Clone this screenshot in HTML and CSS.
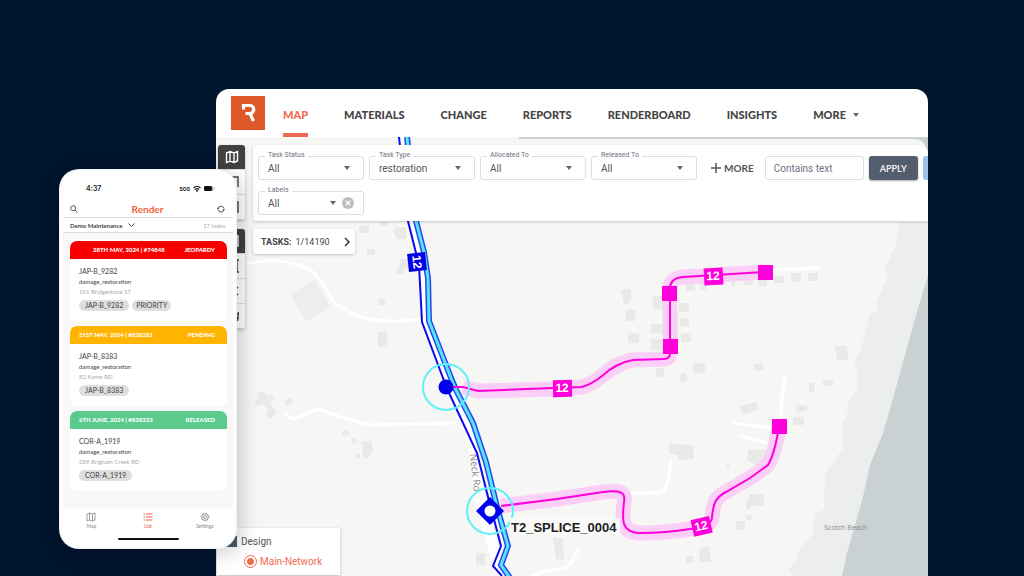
FILE: index.html
```html
<!DOCTYPE html>
<html lang="en">
<head>
<meta charset="utf-8">
<meta name="viewport" content="width=device-width, initial-scale=1">
<title>Render</title>
<link rel="stylesheet" href="styles.css">
</head>
<body>
<main class="window">
  <header class="topbar">
    <a class="logo" href="#" aria-label="Render home">
      <svg viewBox="0 0 34 34"><path d="M12.500 13.500V9.500H18.500a4 4 0 0 1 .5 8L22.500 25M19.500 17.500H14.500" fill="none" stroke="#fff" stroke-width="3.200"/></svg>
    </a>
    <nav class="nav">
      <a class="nav-link nav-link-active" href="#">MAP</a>
      <a class="nav-link" href="#">MATERIALS</a>
      <a class="nav-link" href="#">CHANGE</a>
      <a class="nav-link" href="#">REPORTS</a>
      <a class="nav-link" href="#">RENDERBOARD</a>
      <a class="nav-link" href="#">INSIGHTS</a>
      <a class="nav-link" href="#">MORE <span class="caret"></span></a>
    </nav>
  </header>

  <section class="stage">
    <svg class="map" viewBox="216 137 712 439" preserveAspectRatio="xMinYMin slice" role="img" aria-label="Network map">
      <rect x="216" y="137" width="712" height="439" fill="#f6f6f4"/>
      <path fill="#eceeed" d="M899 222 897 242 885 270 888 277 876 302 877 312 870 314 861 350 854 362 858 372 857 390 847 403 848 412 843 423 843 448 825 475 824 510 815 513 813 533 798 553 797 560 788 570 793 576H928V222Z"/>
      <path fill="#c9d1d3" d="M928 275 917 312 903 362 894 395 883 433 870 465 863 497 847 553 842 576H928ZM519 137H928V150H926Q925 139 914 139H519Z"/>
      <g fill="#e9e9e7">
        <path d="M359 226h10v7h-10zM381 222h7v4h-7zM395 227h11v12h-9l-4-8zM367 249h8v6h-8zM400 259h8v9h-4v6h-7v-7h3zM379 299h6v6h-6zM378 332h9v15h-9zM258 394l5-3 5 5 4-2 2 5-4 3 6 10-5 7-6-4 3-5-6-6-6 2-1-5 5-2zM284 402l6-5 4 5-7 4zM342 431l7-1v5l-7 1zM351 439l4-1 2 5-4 1zM362 442l9-1 2 11-3 1-1 5h-6zM355 454h5v4h-5zM257 393l4-2 2 4z"/>
        <path fill="#eceeed" d="M290 294 315 280 330 307 306 322Z"/>
        <path d="M621 290l10-1v9l-3 6h-4zM626 310h9v11h-9zM628 333h11v10h-11zM653 296h10v13h-10zM651 324h12v9h-12zM651 339h12v11h-12zM679 303h10v9h-10zM680 318h9v8h-9zM681 333h10v9h-10zM655 368h10l-2 9h-6zM679 374l7-2 2 9-7 2zM693 364l12-1v9l-11 2zM686 284h9v7h-9zM700 282h6v8h-5zM730 280h6l-3 8zM744 277h9v8h-9zM758 280h9v6h-9zM774 276h10v7h-10zM791 273h10v9h-10zM808 273h10v8h-10zM835 346h12l1 14h-11zM754 364h9v6h-9zM823 379l10 2v5l-10-1zM809 383h5v8h-5zM740 406l17-4 2 8-17 5zM796 405h11v6l-10 1zM793 417h11v8h-11zM669 444l24 1 1 14-15 1-1-5-9-2zM748 450l17-1v12l-8 5-10-6zM726 465h4v3h-4zM749 494h15v12h-13v3h-5v-9h3zM746 515h6v5h-6zM736 521h9v9h-10zM700 547h9l2 15h-12zM686 556h7v7h-7zM553 538h10v12l1 9h-8zM476 553h9v12h-9zM809 390h6v2h-6z"/>
      </g>
      <g class="road">
        <path d="M246 264C270 258 295 260 313 272C327 284 327 300 341 307C360 320 380 324 424 319"/>
        <path d="M285 415 294 419 318 409 343 418 370 425 455 423"/>
        <path d="M772 270 818 268M786 376Q781 390 781 426M733 423 778 429M739 436 772 444M671 460Q669 482 663 492L625 494M532 576 545 571 565 568Q573 564 577 550"/>
        <path class="road-wide" d="M403 137 412 221 422 268 425 321 446 378 464 415 474 455 481 495 490 535 505 576"/>
        <path class="road-wide" d="M475 455 476 487 486 528 500 576"/>
      </g>
      <text class="road-name" transform="translate(470 454) rotate(84)">Neck Rd</text>
      <text class="place-name" x="824" y="530">Scotch Beach</text>

      <g class="fibre-halo">
        <path d="M463 387 478 391 553 389 582 387Q592 384 602 376Q616 363 633 360L664 359Q670 359 670 353V293Q668 278 683 277L765 272"/>
        <path d="M501 506 557 499 603 492C620 490 626 492 624 502C622 520 621 532 639 533Q666 533 690 529Q711 527 712 518C713 503 716 497 726 492L750 478 768 465Q775 453 779 426"/>
      </g>
      <path class="cable" d="M399 137 408 221 419 265 422 322 443 378 450 395 477 453 487 493 501 546 493 566 502 576"/>
      <path class="cable-wide" d="M407 137 416 221 424 252 428 278 429 321 451 378 456 390 473 423 486 462 497 507 508 546 501 565 510 578"/>
      <path class="cable-core" d="M407 137 416 221 424 252 428 278 429 321 451 378 456 390 473 423 486 462 497 507 508 546 501 565 510 578"/>
      <g class="fibre">
        <path d="M446 387H463L478 391 553 388 582 387Q592 384 602 376Q616 363 633 360L664 359Q670 359 670 353V293Q668 278 683 277L765 272"/>
        <path d="M501 506 557 499 603 492C620 490 626 492 624 502C622 520 621 532 639 533Q666 533 690 529Q711 527 712 518C713 503 716 497 726 492L750 478 768 465Q775 453 779 426"/>
      </g>
      <g class="ring"><circle cx="446" cy="387" r="23"/><circle cx="490" cy="511" r="23"/></g>
      <circle cx="446" cy="387" r="7.500" fill="#0000f0"/>
      <path d="M490 497 504 511 490 525 476 511Z" fill="#0000f0"/>
      <circle cx="490" cy="511" r="5.500" fill="#fff"/>
      <path fill="#ff00dc" d="M662 286h15v15h-15zM663 339h15v15h-15zM758 265h15v15h-15zM772 419h15v15h-15z"/>
      <g class="count" transform="translate(417 262) rotate(84)"><rect x="-9" y="-9" width="18" height="18" fill="#0000e6"/><text y="4">12</text></g>
      <g class="count" transform="translate(562 388) rotate(-1)"><rect x="-9" y="-8" width="19" height="17"/><text y="4">12</text></g>
      <g class="count" transform="translate(713 276) rotate(-3)"><rect x="-9" y="-8" width="19" height="17"/><text y="4">12</text></g>
      <g class="count" transform="translate(701 526) rotate(-13)"><rect x="-9" y="-8" width="19" height="17"/><text y="4">12</text></g>
      <rect x="510" y="518" width="110" height="17" fill="#f9f9f8"/>
      <text class="splice" x="511" y="532">T2_SPLICE_0004</text>
    </svg>

    <div class="overlay">
      <div class="tools">
        <div class="tool-group">
          <button class="tool tool-on" aria-label="Map"><svg viewBox="0 0 14 14"><path d="M1.500 3 5 1.500 9 3 12.500 1.500V11L9 12.500 5 11 1.500 12.500ZM5 1.500V11M9 3V12.500"/></svg></button>
          <button class="tool" aria-label="Select area"><svg viewBox="0 0 14 14"><path d="M2 2H13V12M2 2V12"/></svg></button>
          <button class="tool" aria-label="Table"><svg viewBox="0 0 14 14"><path d="M2 2H13V12H2Z"/></svg></button>
        </div>
        <div class="tool-group">
          <button class="tool tool-on" aria-label="Layers"><svg viewBox="0 0 14 14"><path d="M2 2H13V12H2Z"/></svg></button>
          <button class="tool" aria-label="Measure"><svg viewBox="0 0 14 14"><path d="M14 1H10M12 1V13M14 13H10M3 1V13"/></svg></button>
          <button class="tool" aria-label="Route"><svg viewBox="0 0 14 14"><path d="M13 3 11 5V6M13 11 11 9"/></svg></button>
          <button class="tool" aria-label="Tags"><svg viewBox="0 0 14 14"><path d="M9 5H14M8 9H14M11 3 10 12M13.500 3 12.500 12"/></svg></button>
        </div>
      </div>
      <div class="panels">
        <form class="filters">
          <div class="filter-row">
            <div class="field"><label for="status">Task Status</label><select id="status"><option>All</option></select><span class="caret"></span></div>
            <div class="field"><label for="type">Task Type</label><select id="type"><option>restoration</option></select><span class="caret"></span></div>
            <div class="field"><label for="alloc">Allocated To</label><select id="alloc"><option>All</option></select><span class="caret"></span></div>
            <div class="field"><label for="rel">Released To</label><select id="rel"><option>All</option></select><span class="caret"></span></div>
            <button class="more" type="button"><svg viewBox="0 0 10 10"><path d="M5 0V10M0 5H10"/></svg>MORE</button>
            <input class="search" type="text" placeholder="Contains text" aria-label="Contains text">
            <button class="apply" type="button">APPLY</button>
            <button class="reset" type="button" aria-label="Reset"></button>
          </div>
          <div class="filter-row">
            <div class="field field-clear"><label for="labels">Labels</label><select id="labels"><option>All</option></select><span class="caret"></span>
              <button class="clear" type="button" aria-label="Clear"><svg viewBox="0 0 12 12"><circle cx="6" cy="6" r="6" fill="#bdbdbd"/><path d="M3.700 3.700 8.300 8.300M8.300 3.700 3.700 8.300" stroke="#fff" stroke-width="1.400"/></svg></button></div>
          </div>
        </form>
        <button class="tasks"><b>TASKS:</b><span>1/14190</span><svg viewBox="0 0 6 10"><path d="M1 1 5 5 1 9"/></svg></button>
      </div>
    </div>
    <div class="legend">
      <label class="legend-row"><input class="check" type="checkbox" checked>Design</label>
      <label class="legend-row legend-sub"><input class="radio" type="radio" name="network" checked>Main-Network</label>
    </div>
  </section>
</main>

<aside class="phone">
  <div class="status">
    <span class="time">4:37</span>
    <span class="sos">SOS</span>
    <svg class="wifi" viewBox="0 0 8 6"><path d="M.5 2Q4-1 7.500 2M1.800 3.500Q4 1.700 6.200 3.500" fill="none" stroke="#222" stroke-width="1.200"/><circle cx="4" cy="4.800" r="1" fill="#222"/></svg>
    <svg class="battery" viewBox="0 0 11 5"><rect width="9.500" height="5" rx="1.500" fill="#bbb"/><rect width="8" height="5" rx="1.500" fill="#111"/><rect x="10" y="1.500" width="1" height="2" fill="#bbb"/></svg>
  </div>
  <div class="appbar">
    <button class="icon" aria-label="Search"><svg viewBox="0 0 8 8"><circle cx="3.200" cy="3.200" r="2.500"/><path d="M5 5 7.500 7.500"/></svg></button>
    <span class="brand">Render</span>
    <button class="icon" aria-label="Refresh"><svg viewBox="0 0 8 8"><path d="M1 3.500A3.100 3.100 0 0 1 7 3.500M7 4.700A3.100 3.100 0 0 1 1 4.700M0 2.600 1 4 2.300 3M8 5.400 7 4.200 5.700 5.200"/></svg></button>
  </div>
  <div class="project"><button class="project-name">Demo Maintenance <svg viewBox="0 0 7 4"><path d="M.5.5 3.500 3.500 6.500.5"/></svg></button><span class="total">17 tasks</span></div>
  <div class="list">
    <article class="card">
      <header class="card-head jeopardy"><span>28TH MAY, 2024 | #74848</span><span>JEOPARDY</span></header>
      <div class="card-body"><h2>JAP-B_9282</h2><p>damage_restoration</p><p class="address">191 Bridgestone ST</p><div class="chips"><span class="chip">JAP-B_9282</span><span class="chip chip-tight">PRIORITY</span></div></div>
    </article>
    <article class="card">
      <header class="card-head pending"><span>31ST MAY, 2024 | #828282</span><span>PENDING</span></header>
      <div class="card-body"><h2>JAP-B_8383</h2><p>damage_restoration</p><p class="address">82 Kamo RD</p><div class="chips"><span class="chip">JAP-B_8383</span></div></div>
    </article>
    <article class="card">
      <header class="card-head released"><span>6TH JUNE, 2024 | #828333</span><span>RELEASED</span></header>
      <div class="card-body"><h2>COR-A_1919</h2><p>damage_restoration</p><p class="address">289 Brigham Creek RD</p><div class="chips"><span class="chip">COR-A_1919</span></div></div>
    </article>
  </div>
  <nav class="tabs">
    <a class="tab" href="#"><svg viewBox="0 0 10 10"><path d="M1 2 3.500 1 6.500 2 9 1V8L6.500 9 3.500 8 1 9ZM3.500 1V8M6.500 2V9"/></svg>Map</a>
    <a class="tab tab-active" href="#"><svg viewBox="0 0 10 10"><path d="M3 2H9.500M3 5H9.500M3 8H9.500M.5 2H2M.5 5H2M.5 8H2"/></svg>List</a>
    <a class="tab" href="#"><svg viewBox="0 0 10 10"><circle cx="5" cy="5" r="3.300"/><circle cx="5" cy="5" r="1.500"/><circle cx="5" cy="5" r="3.900" stroke-dasharray="1.500 1.560"/></svg>Settings</a>
  </nav>
  <div class="home"></div>
</aside>
</body>
</html>
```
FILE: styles.css
```css
* { box-sizing: border-box; }
body { margin: 0; height: 100vh; overflow: hidden; background: #00142e; font-family: Roboto, "Liberation Sans", sans-serif; color: #444; }
a { color: inherit; text-decoration: none; }
button { border: 0; padding: 0; background: none; font: inherit; color: inherit; }
svg { display: block; }
h2, p { margin: 0; font-weight: 400; }

.window { display: flex; flex-direction: column; height: 100vh; padding: 89px 96px 0 216px; }
.topbar { display: flex; align-items: stretch; flex: none; height: 48px; padding: 0 15px; background: #fff; border-radius: 13px 13px 0 0; }
.logo { width: 34px; height: 34px; margin-top: 7px; background: #dc5829; }
.nav { display: flex; gap: 36px; margin-left: 18px; font: 900 11px/16px Lato, sans-serif; }
.nav-link { display: flex; align-items: center; gap: 7px; padding-top: 8px; border-bottom: 4px solid transparent; white-space: nowrap; }
.nav-link-active { color: #f26a50; border-color: #ee6a55; }
.caret { width: 0; height: 0; border: 3px solid transparent; border-top: 4px solid #666; border-bottom: 0; pointer-events: none; }

.stage { position: relative; display: flex; flex-direction: column; flex: 1; min-height: 0; overflow: hidden; }
.map { position: absolute; inset: 0; width: 100%; height: 100%; }
.road { fill: none; stroke: #fff; stroke-width: 3; stroke-linecap: round; stroke-linejoin: round; }
.road-wide { stroke-width: 8; }
.road-name { font: 10px "Open Sans", sans-serif; fill: #888; }
.place-name { font: 7px "Open Sans", sans-serif; fill: #888; }
.cable { fill: none; stroke: #0a0aec; stroke-width: 2; }
.cable-wide { fill: none; stroke: #2a48ea; stroke-width: 6; }
.cable-core { fill: none; stroke: #55e4fa; stroke-width: 3; }
.fibre { fill: none; stroke: #ff00dc; stroke-width: 2; }
.fibre-halo { fill: none; stroke: #fbd0f8; stroke-width: 15; }
.ring { fill: none; stroke: #60f0fa; stroke-width: 2; }
.count { fill: #ff00dc; }
.count text { font: 700 12px "Liberation Sans", sans-serif; fill: #fff; text-anchor: middle; }
.splice { font: 700 13px "Liberation Sans", sans-serif; fill: #222; }

.overlay { position: relative; display: grid; grid-template-columns: 27px 1fr; gap: 8px; padding: 8px 0 0 2px; }
.tools { display: grid; align-content: start; gap: 9px; }
.tool-group { display: grid; background: #fff; border-radius: 3px; box-shadow: 0 1px 3px #0004; overflow: hidden; }
.tool { display: grid; place-items: center; height: 25px; border-bottom: 1px solid #ddd; }
.tool svg { width: 14px; height: 14px; fill: none; stroke: #444; stroke-width: 1.400; }
.tool-on { background: #404040; }
.tool-on svg { stroke: #fff; }
.panels { display: grid; justify-items: start; align-content: start; gap: 8px; min-width: 0; }
.filters { display: grid; gap: 11px; width: 100%; padding: 11px 0 6px 5px; background: #fff; border-radius: 3px 8px 0 3px; box-shadow: 0 1px 3px #0003; overflow: hidden; }
.filter-row { display: flex; gap: 5px; }
.field { position: relative; display: flex; align-items: center; flex: none; width: 106px; height: 24px; border: 1px solid #ddd; border-radius: 3px; }
.field label { position: absolute; top: -6px; left: 6px; padding: 0 3px; background: #fff; font-size: 7px; line-height: 9px; color: #6b7280; }
.field select { appearance: none; width: 100%; height: 100%; padding: 0 9px; border: 0; background: none; font: 10px Roboto, sans-serif; color: #555; }
.field .caret { position: absolute; right: 13px; }
.field-clear .caret { right: 27px; }
.clear { position: absolute; right: 9px; }
.clear svg { width: 12px; height: 12px; }
.more { display: flex; align-items: center; gap: 3px; margin: 0 6px 0 9px; font: 700 10px Lato, sans-serif; color: #555; }
.more svg { width: 10px; height: 10px; stroke: #555; stroke-width: 1.500; }
.search { flex: none; width: 99px; height: 24px; padding: 0 8px; border: 1px solid #ddd; border-radius: 3px; font: 10px Roboto, sans-serif; }
.search::placeholder { color: #6b7280; opacity: 1; }
.apply { flex: none; width: 49px; height: 24px; background: #525d6e; border-radius: 3px; box-shadow: 0 1px 2px #0005; font: 700 9px Lato, sans-serif; color: #eee; }
.reset { flex: none; width: 49px; height: 24px; background: #9fc1e6; border-radius: 3px; }
.tasks { display: flex; align-items: center; gap: 4px; height: 25px; padding: 0 5px 0 8px; background: #fff; border-radius: 3px; box-shadow: 0 1px 3px #0003; font-size: 9px; color: #444; }
.tasks svg { width: 6px; height: 10px; margin-left: 10px; fill: none; stroke: #333; stroke-width: 1.500; }
.legend { position: relative; display: grid; align-content: center; gap: 4px; width: 123px; height: 47px; margin: auto 0 1px 1px; background: #fff; box-shadow: 0 1px 3px #0004; padding-left: 9px; font-size: 10px; line-height: 16px; color: #555; }
.legend-row { display: flex; align-items: center; gap: 4px; }
.legend-sub { padding-left: 18px; gap: 3px; color: #f26a50; }
.check { appearance: none; width: 11px; height: 11px; margin: 0; background: #4f5b6a; }
.radio { appearance: none; width: 13px; height: 13px; margin: 0; border: 1px solid #f26a50; border-radius: 50%; background: radial-gradient(#f26a50 0 3px, #fff 4px); }

.phone { position: absolute; left: 59px; top: 169px; width: 178px; padding: 0 4px; background: #fff; border-radius: 20px; box-shadow: 4px 4px 20px #0003, inset 0 0 3px #0002; font-family: Lato, sans-serif; color: #444; overflow: hidden; }
.status { display: flex; align-items: center; gap: 3px; height: 32px; padding: 7px 18px 0 23px; }
.time { margin-right: auto; font: 600 7px Inter, sans-serif; color: #222; }
.sos { font: 700 5px Inter, sans-serif; color: #222; }
.wifi { width: 8px; height: 6px; }
.battery { width: 11px; height: 5px; }
.appbar { display: flex; align-items: center; justify-content: space-between; height: 17px; padding: 0 8px 0 7px; border-bottom: 1px solid #ddd; }
.icon svg { width: 8px; height: 8px; fill: none; stroke: #333; stroke-width: 0.800; }
.brand { font-size: 10px; font-weight: 700; color: #f0643c; }
.project { display: flex; align-items: center; justify-content: space-between; height: 15px; padding: 0 8px 0 7px; border-bottom: 1px solid #ddd; font-size: 6px; }
.project-name { display: flex; align-items: center; gap: 6px; font-weight: 700; }
.project-name svg { width: 7px; height: 4px; fill: none; stroke: #444; }
.total { color: #aaa; }
.list { display: grid; gap: 5px; margin: 0; padding: 8px 6px 17px 7px; background: #f8f8f8; }
.card { background: #fff; border-radius: 7px; overflow: hidden; }
.card-head { display: flex; align-items: center; justify-content: space-between; height: 18px; padding: 0 12px 2px 9px; font-size: 6px; font-weight: 900; color: #fff; }
.jeopardy { padding-left: 23px; background: #f80000; }
.pending { background: #ffb400; }
.released { background: #5bca8d; }
.card-body { padding: 7px 9px 10px; }
.card-body h2 { font-size: 7px; line-height: 11px; }
.card-body p { font-size: 6px; line-height: 10px; }
.card-body .address { color: #aaa; }
.chips { display: flex; gap: 3px; margin-top: 3px; }
.chip { padding: 0 6px; border-radius: 6px; background: #dedede; font-size: 7px; line-height: 11px; }
.chip-tight { padding: 0 4px; }
.tabs { display: grid; grid-template-columns: repeat(3, 1fr); padding-top: 4px; }
.tab { display: grid; justify-items: center; font-size: 5px; line-height: 8px; color: #888; }
.tab svg { width: 10px; height: 10px; fill: none; stroke: #888; stroke-width: 0.800; }
.tab-active { color: #f0563c; }
.tab-active svg { stroke: #f0563c; stroke-width: 1.200; }
.home { width: 61px; height: 2px; margin: 8px auto 9px; border-radius: 1px; background: #111; }
```
